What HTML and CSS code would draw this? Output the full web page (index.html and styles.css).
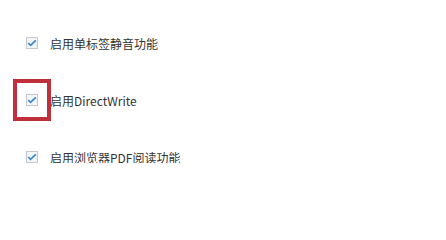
FILE: index.html
```html
<!DOCTYPE html>
<html lang="zh-CN">
<head>
<meta charset="utf-8">
<link rel="stylesheet" href="styles.css">
</head>
<body>
<div class="options">
  <label class="option">
    <span class="check"><svg viewBox="0 0 12 12" width="12" height="12"><path d="M2.2 6 L4.6 8.4 L9.8 3.4" fill="none" stroke="#3a84c8" stroke-width="1.7"/></svg></span>
    <span class="text">启用单标签静音功能</span>
  </label>
  <label class="option">
    <span class="check highlight"><svg viewBox="0 0 12 12" width="12" height="12"><path d="M2.2 6 L4.6 8.4 L9.8 3.4" fill="none" stroke="#3a84c8" stroke-width="1.7"/></svg></span>
    <span class="text">启用DirectWrite</span>
  </label>
  <label class="option">
    <span class="check"><svg viewBox="0 0 12 12" width="12" height="12"><path d="M2.2 6 L4.6 8.4 L9.8 3.4" fill="none" stroke="#3a84c8" stroke-width="1.7"/></svg></span>
    <span class="text">启用浏览器PDF阅读功能</span>
  </label>
</div>
</body>
</html>
```

FILE: styles.css
```css
html, body {
  margin: 0;
  background: #ffffff;
}
.options {
  display: flex;
  flex-direction: column;
  gap: 45px;
  padding: 37px 0 0 26px;
}
.option {
  display: flex;
  align-items: center;
  height: 12px;
  gap: 12px;
}
.check {
  position: relative;
  box-sizing: border-box;
  width: 12px;
  height: 12px;
  border: 1px solid #c4c8cc;
  background: #f1f6fa;
  display: flex;
}
.check svg {
  position: absolute;
  left: -1px;
  top: -1px;
}
.highlight::after {
  content: "";
  position: absolute;
  left: -14px;
  top: -16px;
  width: 30px;
  height: 34px;
  border: 4px solid #bf2f3c;
}
.text {
  font-family: "Noto Sans CJK SC", "Noto Sans", sans-serif;
  font-size: 12px;
  line-height: 12px;
  padding-top: 2px;
  color: #333333;
}
```
